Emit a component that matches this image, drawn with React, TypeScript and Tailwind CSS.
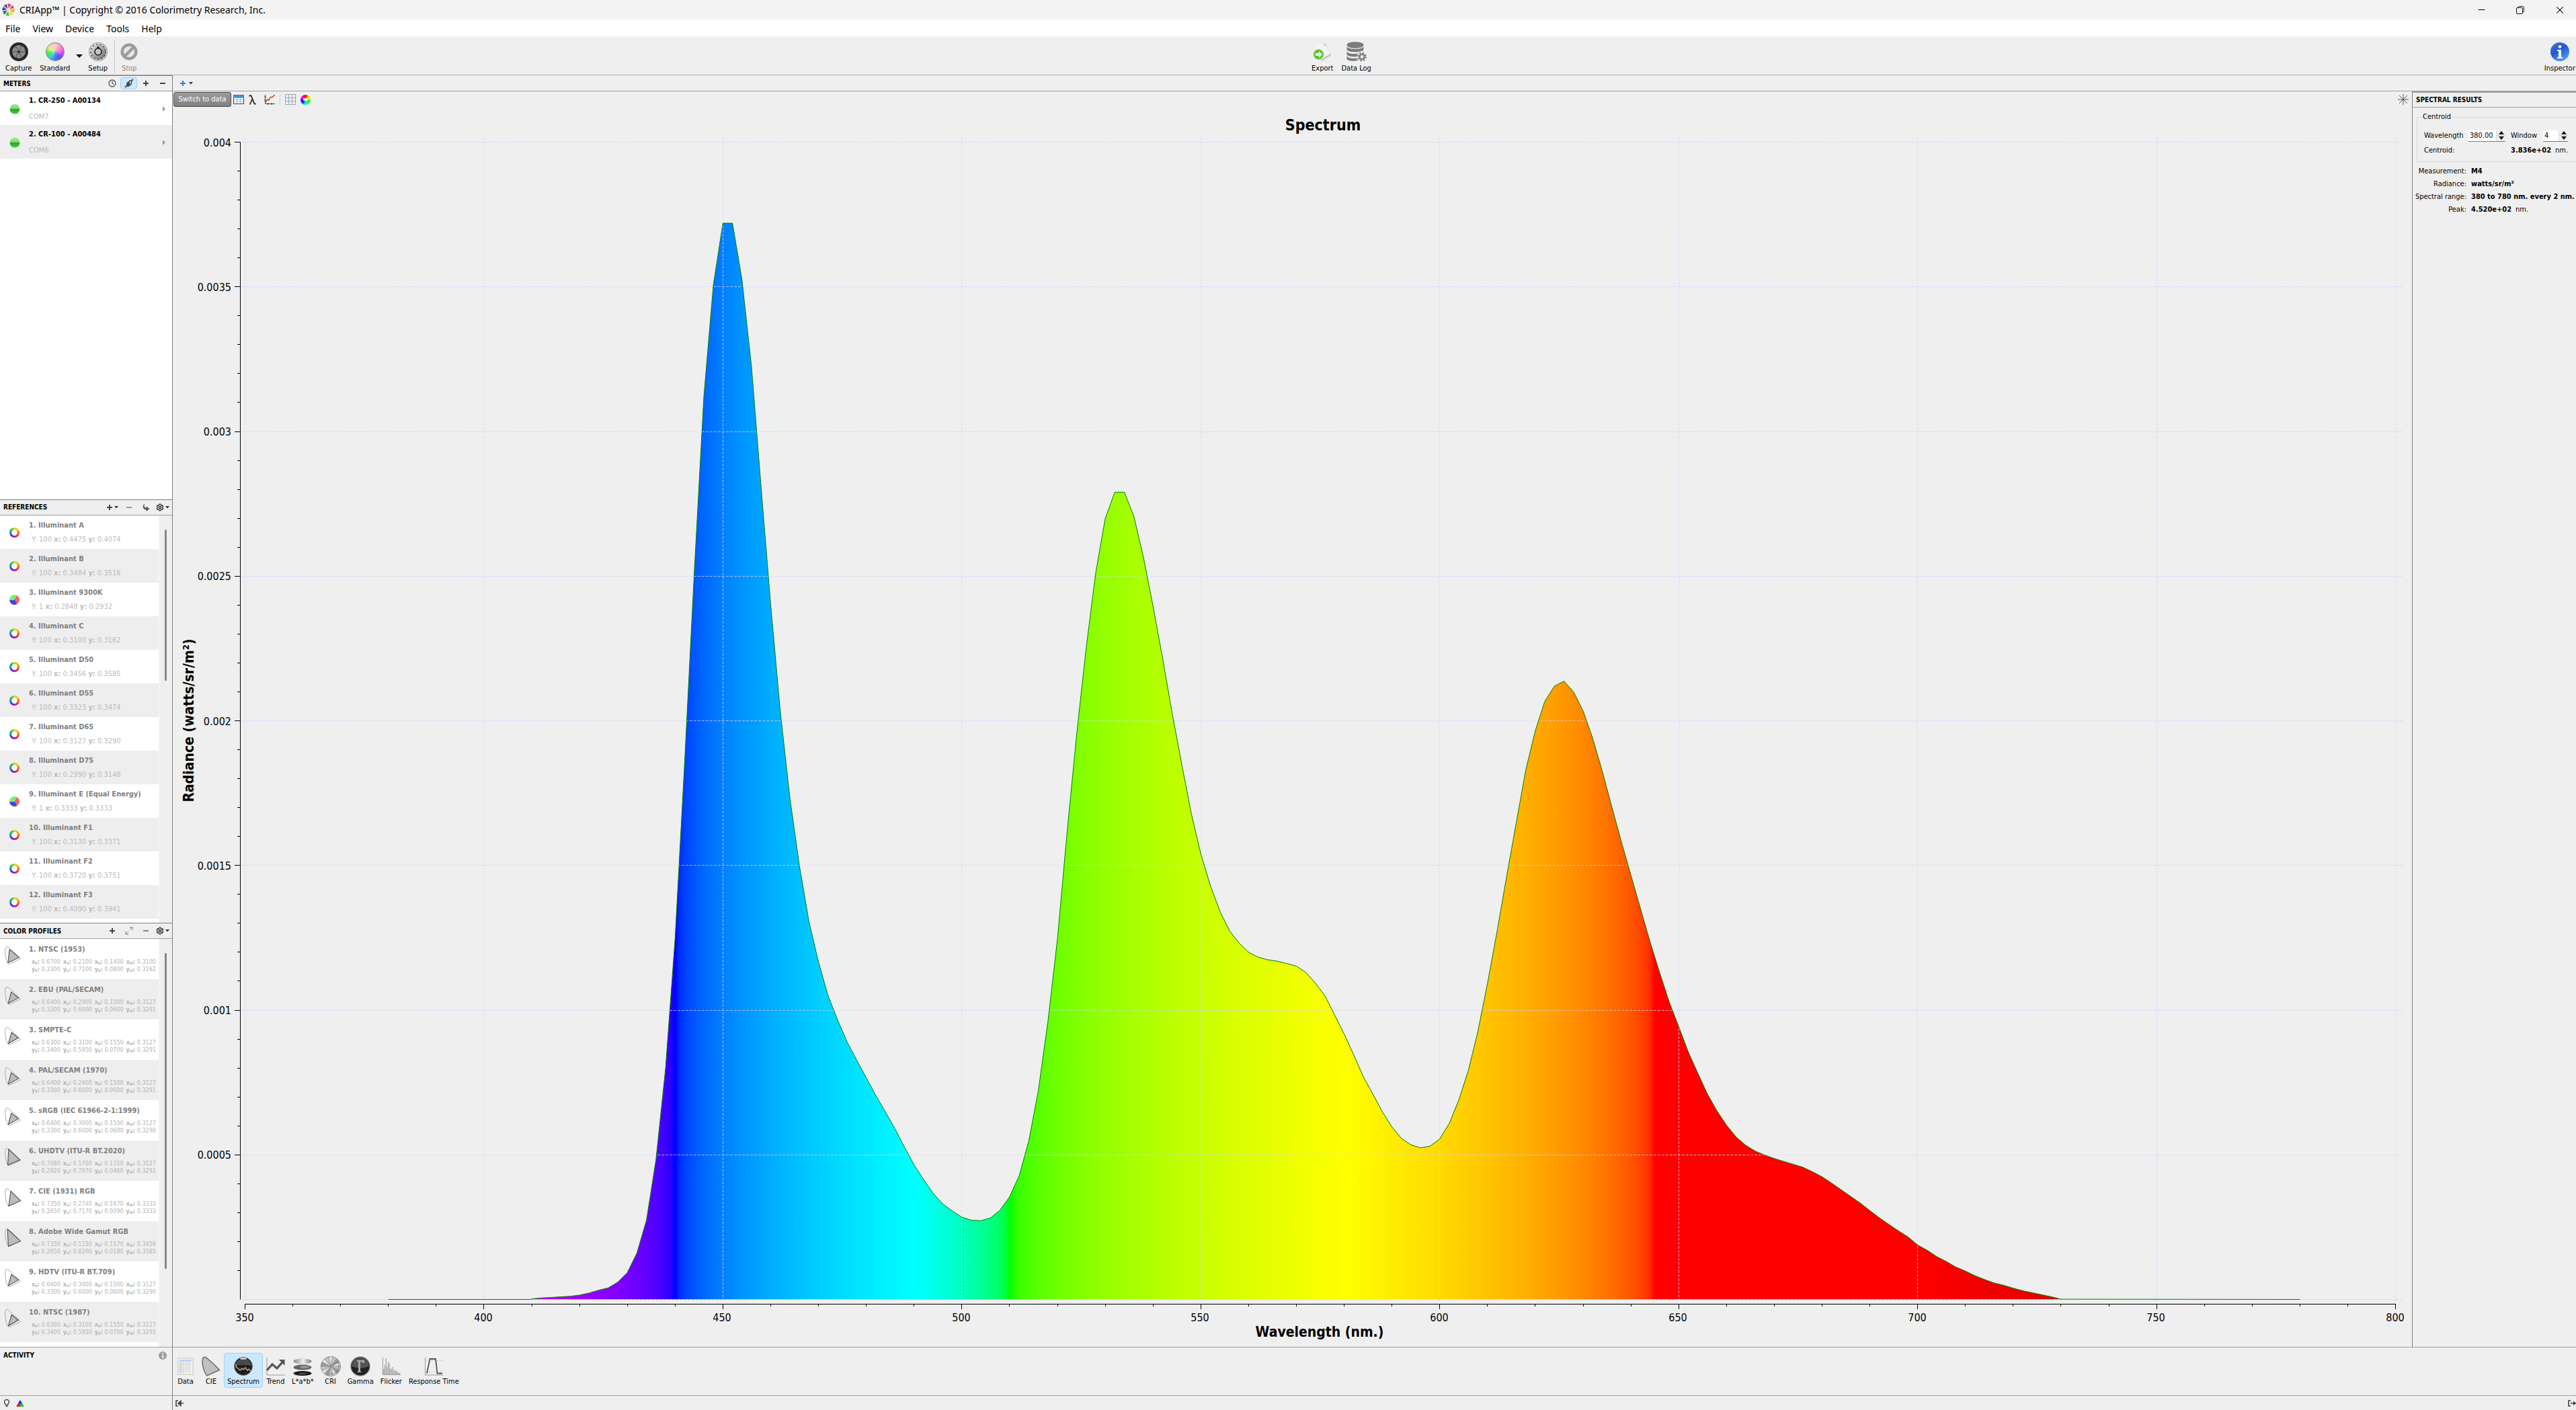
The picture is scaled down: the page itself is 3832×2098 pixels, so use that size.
import { useState, type ReactNode } from 'react';
import { Minus, Settings, X } from 'lucide-react';

interface Profile {
  name: string;
  x: string[];
  y: string[];
}

const METERS = [
  { name: '1. CR-250 - A00134', port: 'COM7' },
  { name: '2. CR-100 - A00484', port: 'COM6' },
];

const REFERENCES = [
  { name: '1. Illuminant A', Y: '100', x: '0.4475', y: '0.4074' },
  { name: '2. Illuminant B', Y: '100', x: '0.3484', y: '0.3516' },
  { name: '3. Illuminant 9300K', Y: '1', x: '0.2848', y: '0.2932' },
  { name: '4. Illuminant C', Y: '100', x: '0.3100', y: '0.3162' },
  { name: '5. Illuminant D50', Y: '100', x: '0.3456', y: '0.3585' },
  { name: '6. Illuminant D55', Y: '100', x: '0.3323', y: '0.3474' },
  { name: '7. Illuminant D65', Y: '100', x: '0.3127', y: '0.3290' },
  { name: '8. Illuminant D75', Y: '100', x: '0.2990', y: '0.3148' },
  { name: '9. Illuminant E (Equal Energy)', Y: '1', x: '0.3333', y: '0.3333' },
  { name: '10. Illuminant F1', Y: '100', x: '0.3130', y: '0.3371' },
  { name: '11. Illuminant F2', Y: '100', x: '0.3720', y: '0.3751' },
  { name: '12. Illuminant F3', Y: '100', x: '0.4090', y: '0.3941' },
];

// primaries in R, G, B, W order
const PROFILES: Profile[] = [
  { name: '1. NTSC (1953)', x: ['0.6700', '0.2100', '0.1400', '0.3100'], y: ['0.3300', '0.7100', '0.0800', '0.3162'] },
  { name: '2. EBU (PAL/SECAM)', x: ['0.6400', '0.2900', '0.1500', '0.3127'], y: ['0.3300', '0.6000', '0.0600', '0.3291'] },
  { name: '3. SMPTE-C', x: ['0.6300', '0.3100', '0.1550', '0.3127'], y: ['0.3400', '0.5950', '0.0700', '0.3291'] },
  { name: '4. PAL/SECAM (1970)', x: ['0.6400', '0.2900', '0.1500', '0.3127'], y: ['0.3300', '0.6000', '0.0600', '0.3291'] },
  { name: '5. sRGB (IEC 61966-2-1:1999)', x: ['0.6400', '0.3000', '0.1500', '0.3127'], y: ['0.3300', '0.6000', '0.0600', '0.3290'] },
  { name: '6. UHDTV (ITU-R BT.2020)', x: ['0.7080', '0.1700', '0.1310', '0.3127'], y: ['0.2920', '0.7970', '0.0460', '0.3291'] },
  { name: '7. CIE (1931) RGB', x: ['0.7350', '0.2740', '0.1670', '0.3333'], y: ['0.2650', '0.7170', '0.0090', '0.3333'] },
  { name: '8. Adobe Wide Gamut RGB', x: ['0.7350', '0.1150', '0.1570', '0.3456'], y: ['0.2650', '0.8260', '0.0180', '0.3585'] },
  { name: '9. HDTV (ITU-R BT.709)', x: ['0.6400', '0.3000', '0.1500', '0.3127'], y: ['0.3300', '0.6000', '0.0600', '0.3290'] },
  { name: '10. NTSC (1987)', x: ['0.6300', '0.3100', '0.1550', '0.3127'], y: ['0.3400', '0.5950', '0.0700', '0.3291'] },
];

// radiance in 1e-5 watts/sr/m², 410 nm to 730 nm, every 2 nm
const RADIANCE = [
  0.2, 0.5, 0.7, 0.9, 1.1, 1.5, 2.2, 3.2, 4, 6, 9.3, 16, 27.4, 48.5, 80, 125, 186, 251, 312, 350.7, 372, 372, 352.4, 322,
  280.4, 240, 203.4, 173.6, 150, 130.6, 116.6, 105, 96.6, 89, 82.7, 76.6, 70.5, 64.8, 59, 52.6, 46.5, 41.4, 36.7, 33,
  30.6, 28.4, 27.4, 27.2, 28.2, 30.9, 35.5, 42.8, 54.8, 72.2, 95.9, 124.5, 161, 195, 225, 251, 269.9, 279, 279, 270.6,
  256.4, 239.6, 221.7, 202.7, 185, 168, 154, 143, 134.2, 127.4, 123.2, 120, 118.3, 117.4, 116.9, 116.1, 115.2, 113,
  109.3, 104.9, 98.3, 91.7, 84.5, 77, 71, 64.8, 59.6, 55.6, 53.4, 52.4, 53, 55.5, 60.9, 69, 79.2, 92.8, 109.3, 127.3,
  146.3, 164.7, 183, 196.6, 206.8, 212, 213.7, 210, 203.4, 194, 182.6, 170.3, 158.2, 146.7, 135.2, 123.7, 113, 102.9,
  94.3, 85.6, 78.2, 71, 65.2, 60.2, 56.2, 53.3, 51.3, 49.9, 48.7, 47.7, 46.7, 45.7, 44.1, 42.4, 40.2, 37.9, 35.6, 33.3,
  30.7, 28.2, 25.9, 23.7, 21.6, 18.8, 17, 14.8, 13.1, 11.2, 9.8, 8.2, 6.9, 5.7, 4.9, 3.9, 3, 2.3, 1.6, 0.9, 0.1,
];

const HORSESHOE =
  'M.175 .005L.15 .03L.11 .09L.08 .17L.045 .295L.01 .5L.004 .66L.014 .75L.04 .812L.074 .834L.115 .826L.2 .78L.3 .69L.45 .55L.6 .4L.735 .265Z';

const WHEEL = 'bg-[conic-gradient(from_90deg,#f60,#f22,#a2b,#42d,#19c,#1b3,#cd2,#fb0,#f60)]';

// ---------- chart ----------

const CHART_W = 3331;
const CHART_H = 1844;
const BASE_Y = 1773.5;
const px = (nm: number) => 107.5 + (nm - 350) * 7.109;
const py = (v: number) => BASE_Y - v * 4.305;
const crisp = (n: number) => Math.floor(n) + 0.5;

function wavelengthColor(nm: number) {
  let r = 0;
  let g = 0;
  let b = 0;
  if (nm < 440) {
    r = (440 - nm) / 60;
    b = 1;
  } else if (nm < 490) {
    g = (nm - 440) / 50;
    b = 1;
  } else if (nm < 510) {
    g = 1;
    b = (510 - nm) / 20;
  } else if (nm < 580) {
    r = (nm - 510) / 70;
    g = 1;
  } else if (nm < 645) {
    r = 1;
    g = (645 - nm) / 65;
  } else {
    r = 1;
  }
  const fade = nm > 700 ? 0.3 + (0.7 * (780 - nm)) / 80 : 1;
  const ch = (c: number) => Math.round(255 * Math.pow(c * fade, 0.43));
  return `rgb(${ch(r)},${ch(g)},${ch(b)})`;
}

function SpectrumChart() {
  const points = RADIANCE.map((v, i) => `${px(410 + i * 2).toFixed(1)},${py(v).toFixed(1)}`).join(' ');
  const stops = Array.from({ length: 321 }, (_, i) => 410 + i);
  const xMajor = Array.from({ length: 10 }, (_, i) => 350 + i * 50);
  const xMinor = Array.from({ length: 46 }, (_, i) => 350 + i * 10);
  const yMajor = Array.from({ length: 9 }, (_, i) => i * 50);
  const yMinor = Array.from({ length: 40 }, (_, i) => (i + 1) * 10);

  return (
    <svg viewBox={`0 0 ${CHART_W} ${CHART_H}`} className="block min-h-0 w-full flex-1" role="img" aria-label="Spectrum">
      <defs>
        <linearGradient id="visible" gradientUnits="userSpaceOnUse" x1={px(410)} x2={px(730)} y1="0" y2="0">
          {stops.map((nm) => (
            <stop key={nm} offset={(nm - 410) / 320} stopColor={wavelengthColor(nm)} />
          ))}
        </linearGradient>
      </defs>

      <polygon points={`${px(410)},${BASE_Y} ${points} ${px(730)},${BASE_Y}`} fill="url(#visible)" />

      <g stroke="#d2d2ff" strokeOpacity=".75" strokeDasharray="4 2" fill="none">
        {xMajor.map((nm) => (
          <path key={nm} d={`M${crisp(px(nm))} 44V1776`} />
        ))}
        {yMajor.map((v) => (
          <path key={v} d={`M103 ${crisp(py(v))}H3317`} />
        ))}
      </g>

      <polyline
        points={`${px(380)},${BASE_Y} ${px(410)},${BASE_Y} ${points} ${px(780)},${BASE_Y}`}
        fill="none"
        stroke="#008000"
      />

      <g stroke="#000" fill="none">
        <path d={`M100.5 51V${BASE_Y}M107 1780.5H3307`} />
        {xMinor.map((nm) => (
          <path key={nm} d={`M${crisp(px(nm))} 1780v${nm % 50 === 0 ? 8 : 4}`} />
        ))}
        {yMinor.map((v) => (
          <path key={v} d={`M${v % 50 === 0 ? 92 : 96} ${crisp(py(v))}H101`} />
        ))}
      </g>

      <g className="text-base" fill="#000">
        {xMajor.map((nm) => (
          <text key={nm} x={Math.round(px(nm)) - 1} y="1806" textAnchor="middle">
            {nm}
          </text>
        ))}
        {yMajor.slice(1).map((v) => (
          <text key={v} x="87" y={Math.round(py(v)) + 6} textAnchor="end">
            {v / 100000}
          </text>
        ))}
      </g>

      <g className="text-[21px] font-bold" textAnchor="middle">
        <text x="1711" y="34" className="text-[23px]">
          Spectrum
        </text>
        <text x="1706" y="1829">
          Wavelength (nm.)
        </text>
        <text transform="translate(31 912) rotate(-90)">Radiance (watts/sr/m²)</text>
      </g>
    </svg>
  );
}

// ---------- small icons ----------

function Caret() {
  return (
    <svg viewBox="0 0 6 4" className="h-1 w-1.5 shrink-0">
      <path d="M0 0H6L3 3.5Z" fill="#333" />
    </svg>
  );
}

function PlusIcon({ color = '#444' }: { color?: string }) {
  return (
    <svg viewBox="0 0 10 10" className="size-2.5 shrink-0">
      <path d="M5 1V9M1 5H9" stroke={color} strokeWidth="2" />
    </svg>
  );
}

function MinusIcon({ color = '#444' }: { color?: string }) {
  return (
    <svg viewBox="0 0 10 10" className="size-2.5 shrink-0">
      <path d="M1 5H9" stroke={color} strokeWidth="2" />
    </svg>
  );
}

function ClockIcon() {
  return (
    <svg viewBox="0 0 12 12" className="size-3" fill="none" stroke="#555" strokeWidth="1.3">
      <circle cx="6" cy="6" r="5" />
      <path d="M6 2.5V6L8.5 7.5" />
    </svg>
  );
}

function PlugIcon() {
  return (
    <svg viewBox="0 0 14 14" className="size-3.5" fill="none" stroke="#4a4a4a">
      <path d="M1 13L3.5 10.5M10.5 3.5L13 1" strokeWidth="1.8" />
      <path d="M3.500 11C2 7.500 4 4 8.500 3L6 7H9L6.500 11Z" fill="#4a4a4a" stroke="none" />
      <path d="M10 3C12 6 10.500 10 5.500 11.500L8.500 7H6L8 3Z" strokeWidth="1.4" />
    </svg>
  );
}

function LoadIcon() {
  return (
    <svg viewBox="0 0 12 12" className="size-3">
      <path d="M4.500 .5C.5 2 .5 9 6.500 9.500V12L11.500 8L6.500 4.500V6.800C3.500 6.500 2.800 3 4.500 .5Z" fill="#555" />
    </svg>
  );
}

function ExpandIcon() {
  return (
    <svg viewBox="0 0 12 12" className="size-3" fill="none" stroke="#999" strokeWidth="1.3">
      <path d="M7 1H11V5M5 11H1V7" />
      <path d="M11 1L7 5M5 7L1 11" strokeDasharray="1.500 1" />
    </svg>
  );
}

function GamutIcon({ profile }: { profile: Profile }) {
  const triangle = [0, 1, 2].map((i) => `${profile.x[i]},${profile.y[i]}`).join(' ');
  return (
    <svg viewBox="0 0 26 28" className="mt-2.5 h-7 w-[26px] shrink-0">
      <g transform="translate(.5 28) scale(31.5 -31.5)" strokeWidth=".026" strokeLinejoin="round">
        <path d={HORSESHOE} fill="none" stroke="#999" />
        <polygon points={triangle} fill="#bbb" stroke="#444" strokeWidth=".032" />
      </g>
    </svg>
  );
}

function StatusBall() {
  return (
    <svg viewBox="0 0 16 17" className="h-[17px] w-4 shrink-0">
      <defs>
        <linearGradient id="ball" x1="0" x2="0" y1="0" y2="1">
          <stop offset="0" stopColor="#a6e59a" />
          <stop offset=".48" stopColor="#7fd672" />
          <stop offset=".5" stopColor="#1fa518" />
          <stop offset="1" stopColor="#3fd032" />
        </linearGradient>
      </defs>
      <ellipse cx="8" cy="9.500" rx="7.500" ry="7" fill="#000" opacity=".15" />
      <circle cx="8" cy="8" r="7.300" fill="url(#ball)" />
    </svg>
  );
}

function RgbPie() {
  return (
    <span className="size-[15px] shrink-0 rounded-full bg-[conic-gradient(from_30deg,#e66_0_120deg,#44d_120deg_240deg,#7e7_240deg)]" />
  );
}

function ColorRing() {
  return (
    <span className={`flex size-[15px] shrink-0 items-center justify-center rounded-full ${WHEEL}`}>
      <span className="size-[9px] rounded-full bg-white" />
    </span>
  );
}

function LogoIcon() {
  const colors = ['#d14a8b', '#e2512c', '#f1a62b', '#e8dc3a', '#5bb947', '#1f7d45', '#2455a8', '#7a3d98'];
  return (
    <svg viewBox="-10 -10 20 20" className="size-[19px] shrink-0">
      {colors.map((c, i) => (
        <path key={c} d="M0 -2L-2.800 -9Q0 -10.500 3 -8.500Z" fill={c} transform={`rotate(${i * 45 + 10})`} />
      ))}
      <circle r="2.500" fill="#dde3f5" />
    </svg>
  );
}

function CaptureIcon() {
  return (
    <svg viewBox="-14 -14 28 28" className="size-7">
      <circle r="14" fill="#2b2b2b" />
      <circle r="10.500" fill="#8a8a8a" stroke="#111" />
      {[0, 60, 120, 180, 240, 300].map((a) => (
        <path key={a} d="M1.500 -1Q5 -5 3 -10" fill="none" stroke="#444" strokeWidth=".8" transform={`rotate(${a})`} />
      ))}
      <circle r="1.600" fill="#000" />
    </svg>
  );
}

function StandardIcon() {
  return (
    <span className="flex size-7 rounded-full border border-[#888] bg-[radial-gradient(circle_at_50%_20%,#ffffffaa,#ffffff00_60%),conic-gradient(from_0deg,#fa7fa0,#f0569a_50deg,#e24bf0_90deg,#6a4af0_140deg,#3d7ef5_180deg,#35d6d0_220deg,#40e84a_260deg,#c8f04a_300deg,#fa7fa0)]" />
  );
}

function SetupIcon() {
  return (
    <svg viewBox="-14 -14 28 28" className="size-7">
      <defs>
        <linearGradient id="knob" x1="0" x2="1" y1="0" y2="1">
          <stop offset="0" stopColor="#eee" />
          <stop offset="1" stopColor="#666" />
        </linearGradient>
      </defs>
      <circle r="14" fill="#9a9a9a" />
      <circle r="12.500" fill="url(#knob)" stroke="#eee" strokeWidth="1" />
      <circle r="11" fill="none" stroke="#333" strokeWidth="1.500" strokeDasharray="2 3.500" pathLength="70" />
      <circle r="5" fill="#c5c5c5" stroke="#222" strokeWidth="1.600" />
      <path d="M0 -9L2.500 -5H-2.500Z" fill="#222" />
    </svg>
  );
}

function StopIcon() {
  return (
    <svg viewBox="-14 -14 28 28" className="size-7" fill="none" stroke="#9b9b9b" strokeWidth="4.500">
      <circle r="10.300" fill="#e6e6e6" />
      <path d="M-7 7L7 -7" />
    </svg>
  );
}

function ExportIcon() {
  return (
    <svg viewBox="0 0 28 28" className="size-7">
      <path d="M3 6L17 1L27 19L13 28Z" fill="#b9bcc2" />
      <path d="M2 5L16 0L26 17L12 26Z" fill="#f2f4f8" stroke="#dfe2e8" strokeWidth=".6" />
      <path d="M16 0L21 4L16 6Z" fill="#cfd6e2" />
      <circle cx="8.500" cy="18" r="7.300" fill="#59c22c" stroke="#7bd94e" />
      <path d="M4 16H9V13L14 18L9 23V20H4Z" fill="#fff" />
    </svg>
  );
}

function DataLogIcon() {
  return (
    <svg viewBox="0 0 30 30" className="size-[30px]">
      <g fill="#7c7c7c">
        <ellipse cx="13" cy="5" rx="12.500" ry="4.800" />
        <path d="M.5 7.500C3 12 23 12 25.500 7.500V12C23 16.500 3 16.500 .5 12Z" />
        <path d="M.5 14.500C3 19 16 19 20 16.500L16 22C9 23 2 22 .5 19Z" />
        <path d="M.5 21.500C3 25 11 25.500 15 24.500L17 28C9 29.500 2 28.500 .5 26Z" />
      </g>
      <circle cx="23" cy="22.500" r="4" fill="none" stroke="#efefef" strokeWidth="7" />
      <circle cx="23" cy="22.500" r="5.800" fill="none" stroke="#7c7c7c" strokeWidth="2.400" strokeDasharray="2.300 2.250" />
      <circle cx="23" cy="22.500" r="3.600" fill="#efefef" stroke="#7c7c7c" strokeWidth="2.400" />
    </svg>
  );
}

function InfoBall() {
  return (
    <svg viewBox="0 0 28 28" className="size-7">
      <defs>
        <linearGradient id="info" x1="0" x2=".6" y1="0" y2="1">
          <stop offset="0" stopColor="#4a78dc" />
          <stop offset=".5" stopColor="#1f57cf" />
          <stop offset="1" stopColor="#4a9df5" />
        </linearGradient>
      </defs>
      <circle cx="14" cy="14" r="14" fill="url(#info)" />
      <circle cx="14" cy="6.500" r="2.300" fill="#fff" />
      <path d="M10 11H16V22H18V24H10V22H12V13H10Z" fill="#fff" />
    </svg>
  );
}

// ---------- bottom view icons ----------

function DataIcon() {
  return (
    <svg viewBox="0 0 28 30" className="h-[30px] w-6" fill="none">
      <rect x="1" y="1" width="26" height="28" fill="#f4f4f4" stroke="#bbb" />
      <path d="M4 5H24" stroke="#a9ccf5" strokeWidth="2.500" />
      <path d="M5 6V27" stroke="#d4d4d4" strokeWidth="3" />
      <path d="M4 9H24M4 12H24M4 15H24M4 18H24M4 21H24M4 24H24M10 5V27M15 5V27M20 5V27" stroke="#ccc" strokeWidth=".8" />
    </svg>
  );
}

function CieIcon() {
  return (
    <svg viewBox="0 0 28 30" className="h-[30px] w-7">
      <path d="M8 29C3 24 0 10 1.500 4C2.500 .5 5 .5 8 3C14 8 21 14 26.500 20.500Z" fill="#bfc1bf" stroke="#666" strokeWidth="1.400" />
    </svg>
  );
}

function SpectrumIcon() {
  return (
    <svg viewBox="0 0 28 28" className="size-7">
      <circle cx="14" cy="14" r="13.500" fill="#1e1e1e" stroke="#777" />
      <path d="M2 13C3 -1 25 -1 26 13Q14 11 2 13Z" fill="#4a4a4a" />
      <ellipse cx="14" cy="2.500" rx="5" ry="1.300" fill="#ddd" />
      <path d="M3 11V15L6 17L9 20L12 17L14 19L17 16L20 20L22 18L25 21" fill="none" stroke="#c4c4c4" strokeWidth="1.200" />
    </svg>
  );
}

function TrendIcon() {
  return (
    <svg viewBox="0 0 28 28" className="size-7" fill="none">
      <path d="M1 1V27H28" stroke="#999" />
      <path d="M1 20L9 11L16 17L25 7" stroke="#555" strokeWidth="3.200" />
      <path d="M19 4L27.500 4V13Z" fill="#555" />
    </svg>
  );
}

function LabIcon() {
  return (
    <svg viewBox="0 0 28 28" className="size-7">
      <defs>
        <linearGradient id="lab">
          <stop offset="0" stopColor="#888" />
          <stop offset=".55" stopColor="#eee" />
          <stop offset="1" stopColor="#777" />
        </linearGradient>
      </defs>
      <path d="M14 0V6" stroke="#ccc" />
      <ellipse cx="14" cy="6.500" rx="13.500" ry="4" fill="url(#lab)" />
      <ellipse cx="14" cy="15.500" rx="13.500" ry="4" fill="#666" />
      <ellipse cx="17" cy="15" rx="7" ry="1.800" fill="#999" />
      <ellipse cx="14" cy="24.500" rx="13.500" ry="3.500" fill="#1c1c1c" />
      <ellipse cx="14" cy="25" rx="6" ry="1" fill="#555" />
    </svg>
  );
}

function CriIcon() {
  return (
    <svg viewBox="-15 -15 30 30" className="size-[30px]">
      <circle r="14.500" fill="#b4b4b4" stroke="#888" />
      {Array.from({ length: 14 }, (_, i) => (
        <path
          key={i}
          d="M0 0L-3 -14Q0 -15 3 -14Z"
          fill={i % 3 === 0 ? '#e2e2e2' : i % 3 === 1 ? '#c4c4c4' : '#999'}
          stroke="#888"
          strokeWidth=".5"
          transform={`rotate(${(i * 360) / 14})`}
        />
      ))}
      <path d="M0 0L11 -6Q14 0 9 8Q4 13 -2 11" fill="none" stroke="#777" />
    </svg>
  );
}

function GammaIcon() {
  return (
    <svg viewBox="0 0 30 30" className="size-[30px]">
      <circle cx="15" cy="15" r="14.200" fill="#222" stroke="#999" strokeWidth="1.200" />
      <path d="M2.500 15C2 -2 28 -2 27.500 15Q15 20 2.500 15Z" fill="#555" />
      <path d="M10 6H21V10H19Q18.500 8 15 8V22L17 24H10L12 22V8H10Z" fill="#aaa" />
    </svg>
  );
}

function FlickerIcon() {
  const bars = [8, 14, 24, 11, 19, 16, 9, 8, 11, 6, 7, 5, 4, 3, 2];
  return (
    <svg viewBox="0 0 28 28" className="size-7">
      <path d="M1.500 1V26.500H28" fill="none" stroke="#999" />
      {bars.map((h, i) => (
        <path key={i} d={`M${i * 1.7 + 2.8} 26V${26 - h}`} stroke="#888" strokeWidth=".9" />
      ))}
    </svg>
  );
}

function ResponseIcon() {
  return (
    <svg viewBox="0 0 28 28" className="size-7" fill="none">
      <path d="M1.500 1V27H28" stroke="#999" />
      <path d="M3 5H28M3 22H28" stroke="#bbb" strokeDasharray="2 2" strokeWidth="1.200" />
      <path d="M4 24.500L8.500 3H17L19.500 24.500H27" stroke="#555" strokeWidth="1.800" />
    </svg>
  );
}

const VIEWS = [
  { label: 'Data', icon: <DataIcon /> },
  { label: 'CIE', icon: <CieIcon /> },
  { label: 'Spectrum', icon: <SpectrumIcon /> },
  { label: 'Trend', icon: <TrendIcon /> },
  { label: 'L*a*b*', icon: <LabIcon /> },
  { label: 'CRI', icon: <CriIcon /> },
  { label: 'Gamma', icon: <GammaIcon /> },
  { label: 'Flicker', icon: <FlickerIcon /> },
  { label: 'Response Time', icon: <ResponseIcon /> },
];

// ---------- building blocks ----------

function ToolButton({ label, icon, disabled }: { label: string; icon: ReactNode; disabled?: boolean }) {
  return (
    <button disabled={disabled} className="flex flex-col items-center gap-0.5 disabled:text-[#8a8a8a]">
      <span className="flex h-[30px] items-center">{icon}</span>
      <span className="leading-4">{label}</span>
    </button>
  );
}

function HeaderButton({ label, active, children }: { label: string; active?: boolean; children: ReactNode }) {
  return (
    <button
      aria-label={label}
      className={
        active
          ? 'flex h-[18px] w-[25px] items-center justify-center rounded-sm border border-[#99d1ff] bg-[#cce8ff]'
          : 'flex h-[18px] w-[25px] items-center justify-center gap-0.5'
      }
    >
      {children}
    </button>
  );
}

function Section({ title, actions, children }: { title: string; actions: ReactNode; children: ReactNode }) {
  return (
    <section className="flex min-h-0 flex-1 basis-0 flex-col border-t border-[#7f7f7f]">
      <div className="flex h-[23px] shrink-0 items-center justify-between border-b border-[#9f9f9f] pr-0.5 pl-[5px]">
        <h2 className="text-[10px] font-bold">{title}</h2>
        <div className="flex">{actions}</div>
      </div>
      <div className="flex min-h-0 flex-1">{children}</div>
    </section>
  );
}

function ScrollTrack({ long }: { long?: boolean }) {
  return (
    <div className="flex w-5 shrink-0 justify-center border-l border-[#f8f8f8] pt-[21px]">
      <div className={long ? 'h-[470px] w-[3px] rounded-full bg-[#868686]' : 'h-[225px] w-[3px] rounded-full bg-[#868686]'} />
    </div>
  );
}

function PrimaryLine({ axis, values }: { axis: string; values: string[] }) {
  return (
    <p className="flex h-[11px] items-center justify-between">
      {values.map((v, i) => (
        <span key={i} className="whitespace-nowrap">
          <b>
            {axis}
            <sub className="bottom-[-1px] text-[5px]">{'RGBW'[i]}</sub>:
          </b>{' '}
          {v}
        </span>
      ))}
    </p>
  );
}

function Spinner({ id, value, onChange, className }: { id: string; value: string; onChange: (v: string) => void; className: string }) {
  const step = (d: number) => {
    const next = Number(value) + d;
    onChange(value.includes('.') ? next.toFixed(2) : String(next));
  };
  return (
    <span className={`flex h-[17px] border-b border-[#777] bg-white ${className}`}>
      <input id={id} value={value} onChange={(e) => onChange(e.target.value)} className="w-0 min-w-0 flex-1 pl-0.5 outline-none" />
      <span className="flex w-3.5 flex-col border-l border-[#ddd] bg-[#efefef]">
        <button aria-label="Increase" onClick={() => step(1)} className="flex flex-1 items-center justify-center border-b border-[#ccc]">
          <svg viewBox="0 0 8 5" className="h-[5px] w-2">
            <path d="M0 5H8L4 0Z" fill="#111" />
          </svg>
        </button>
        <button aria-label="Decrease" onClick={() => step(-1)} className="flex flex-1 items-center justify-center">
          <svg viewBox="0 0 8 5" className="h-[5px] w-2">
            <path d="M0 0H8L4 5Z" fill="#111" />
          </svg>
        </button>
      </span>
    </span>
  );
}

function Sidebar() {
  return (
    <aside className="flex w-[257px] shrink-0 flex-col border-r border-[#7f7f7f]">
      <Section
        title="METERS"
        actions={
          <>
            <HeaderButton label="History"><ClockIcon /></HeaderButton>
            <HeaderButton label="Connect" active><PlugIcon /></HeaderButton>
            <HeaderButton label="Add meter"><PlusIcon /></HeaderButton>
            <HeaderButton label="Remove meter"><MinusIcon /></HeaderButton>
          </>
        }
      >
        <ul className="flex-1 bg-white">
          {METERS.map((m) => (
            <li key={m.port} className="flex h-[50px] items-center pt-0.5 pr-2.5 pl-3.5 even:bg-[#eee]">
              <StatusBall />
              <div className="ml-[13px] flex-1 leading-6">
                <p className="font-bold">{m.name}</p>
                <p className="text-[#b8b8b8]">{m.port}</p>
              </div>
              <svg viewBox="0 0 4 8" className="h-2 w-1">
                <path d="M0 0L4 4L0 8Z" fill="#999" />
              </svg>
            </li>
          ))}
        </ul>
      </Section>

      <Section
        title="REFERENCES"
        actions={
          <>
            <HeaderButton label="Add reference"><PlusIcon /><Caret /></HeaderButton>
            <HeaderButton label="Remove reference"><MinusIcon color="#999" /></HeaderButton>
            <HeaderButton label="Load reference"><LoadIcon /></HeaderButton>
            <HeaderButton label="Reference settings"><Settings className="size-3 shrink-0" strokeWidth={3} color="#444" /><Caret /></HeaderButton>
          </>
        }
      >
        <ul className="min-w-0 flex-1 overflow-hidden bg-white">
          {REFERENCES.map((r) => (
            <li key={r.name} className="flex h-[50px] items-center pt-0.5 pl-3.5 even:bg-[#eee]">
              {r.Y === '1' ? <RgbPie /> : <ColorRing />}
              <div className="ml-3.5 pb-0.5 leading-[21px] whitespace-nowrap">
                <p className="font-bold text-[#7f7f7f]">{r.name}</p>
                <p className="pl-1 text-[#bcbcbc]">
                  Y: {r.Y} <b>x:</b> {r.x} <b>y:</b> {r.y}
                </p>
              </div>
            </li>
          ))}
        </ul>
        <ScrollTrack />
      </Section>

      <Section
        title="COLOR PROFILES"
        actions={
          <>
            <HeaderButton label="Add profile"><PlusIcon /></HeaderButton>
            <HeaderButton label="Expand profile"><ExpandIcon /></HeaderButton>
            <HeaderButton label="Remove profile"><MinusIcon color="#888" /></HeaderButton>
            <HeaderButton label="Profile settings"><Settings className="size-3 shrink-0" strokeWidth={3} color="#444" /><Caret /></HeaderButton>
          </>
        }
      >
        <ul className="min-w-0 flex-1 overflow-hidden bg-white">
          {PROFILES.map((p) => (
            <li key={p.name} className="flex h-[60px] pl-[7px] even:bg-[#eee]">
              <GamutIcon profile={p} />
              <div className="ml-2.5 flex-1 pt-[5px] whitespace-nowrap">
                <p className="leading-[21px] font-bold text-[#7f7f7f]">{p.name}</p>
                <div className="pt-[3px] pr-1 pl-1 text-[9px] text-[#b5b5b5]">
                  <PrimaryLine axis="x" values={p.x} />
                  <PrimaryLine axis="y" values={p.y} />
                </div>
              </div>
            </li>
          ))}
        </ul>
        <ScrollTrack long />
      </Section>

      <section className="flex h-[72px] shrink-0 items-start justify-between border-t border-[#9f9f9f] pt-1 pr-2 pl-[5px]">
        <h2 className="text-[10px] leading-4 font-bold">ACTIVITY</h2>
        <svg viewBox="0 0 12 12" className="mt-0.5 size-3">
          <circle cx="6" cy="6" r="6" fill="#9a9ea2" />
          <circle cx="6.300" cy="3" r="1" fill="#fff" />
          <path d="M5 5H7V8.500H7.800V9.500H4.800V8.500H5.500V6H5Z" fill="#fff" />
        </svg>
      </section>
      <div className="flex h-[22px] shrink-0 items-center gap-2 border-t border-[#9f9f9f] pl-1">
        <svg viewBox="0 0 12 12" className="size-3" fill="none" stroke="#444" strokeWidth="1.400">
          <path d="M4.500 8.500C4.500 7 2.500 6 2.500 4A3.500 3.500 0 0 1 9.500 4C9.500 6 7.500 7 7.500 8.500ZM4.500 10.500H7.500" />
        </svg>
        <svg viewBox="0 0 12 10" className="h-2.5 w-3">
          <path d="M6 0L9 5L6 6.500L3 5Z" fill="#22f" />
          <path d="M3 5L6 6.500V10H0Z" fill="#f01030" />
          <path d="M9 5L6 6.500V10H12Z" fill="#1cc430" />
        </svg>
      </div>
    </aside>
  );
}

function Results() {
  const [wavelength, setWavelength] = useState('380.00');
  const [span, setSpan] = useState('4');

  return (
    <aside className="w-[244px] shrink-0 overflow-hidden border-t-2 border-l border-t-[#9f9f9f] border-l-[#7f7f7f]">
      <h2 className="h-[22px] border-b border-[#9f9f9f] pl-[5px] text-[10px] leading-[21px] font-bold">SPECTRAL RESULTS</h2>
      <fieldset className="mt-1.5 ml-1.5 border-y border-l border-[#d8d8d8] pb-[7px] pl-2.5">
        <legend className="-ml-1 px-0.5 leading-4">Centroid</legend>
        <div className="grid grid-cols-[66px_63px_48px_auto] items-center gap-y-1 pt-[11px] leading-[18px]">
          <label htmlFor="wavelength">Wavelength</label>
          <Spinner id="wavelength" value={wavelength} onChange={setWavelength} className="w-[55px]" />
          <label htmlFor="window">Window</label>
          <Spinner id="window" value={span} onChange={setSpan} className="w-[37px]" />
          <span className="col-span-2">Centroid:</span>
          <span className="col-span-2 flex gap-1.5">
            <b>3.836e+02</b> nm.
          </span>
        </div>
      </fieldset>
      <dl className="grid grid-cols-[80px_auto] gap-x-[7px] pt-1 leading-[19px] whitespace-nowrap">
        <dt className="text-right">Measurement:</dt>
        <dd className="font-bold">M4</dd>
        <dt className="text-right">Radiance:</dt>
        <dd className="font-bold">watts/sr/m²</dd>
        <dt className="flex justify-end">Spectral range:</dt>
        <dd className="font-bold">380 to 780 nm. every 2 nm.</dd>
        <dt className="text-right">Peak:</dt>
        <dd className="flex gap-1.5">
          <b>4.520e+02</b> nm.
        </dd>
      </dl>
    </aside>
  );
}

function PlotToolbar() {
  return (
    <div className="flex h-6 shrink-0 items-center pr-[5px] pl-px">
      <button className="h-[22px] w-[86px] rounded-[3px] border border-[#4c4c4c] bg-linear-to-b from-[#9b9b9b] to-[#828282] text-white">
        Switch to data
      </button>
      <button aria-label="Table" className="ml-[3px]">
        <svg viewBox="0 0 16 14" className="h-3.5 w-4">
          <rect x=".5" y=".5" width="15" height="13" fill="#fff" stroke="#345" />
          <path d="M0 0H16V4.500H0Z" fill="#1e78d2" />
          <path d="M1 2H5M6 2H10M11 2H15" stroke="#7fd0ff" />
          <path d="M1 7.500H15M1 10.500H15M5.500 5V13M10.500 5V13" stroke="#9ab" strokeWidth=".8" />
        </svg>
      </button>
      <button aria-label="Wavelength" className="ml-[7px]">
        <svg viewBox="0 0 11 15" className="h-[15px] w-[11px]" fill="none" stroke="#333">
          <path d="M1 2.500C1.500 .5 3.500 .5 4.300 3L8 12.500Q8.800 14.500 10.500 13" strokeWidth="2" />
          <path d="M5.500 6.500L1.500 14.500" strokeWidth="1.700" />
        </svg>
      </button>
      <button aria-label="Curves" className="ml-3">
        <svg viewBox="0 0 16 16" className="size-4" fill="none">
          <path d="M1.500 1V14.500H16M0 4H3M0 9H3M6 13V16M11 13V16" stroke="#444" />
          <path d="M2 12L5 8L7 9L9 5L13 4L15.500 1" stroke="#d8481e" strokeWidth="1.600" />
        </svg>
      </button>
      <span className="mx-[7px] h-4 w-px bg-[#c8c8c8]" />
      <button aria-label="Grid">
        <svg viewBox="0 0 16 16" className="size-4" fill="none" stroke="#9aa8b5">
          <path d="M.5 0V16M5.500 0V16M10.500 0V16M15.500 0V16M0 .5H16M0 5.500H16M0 10.500H16M0 15.500H16" />
        </svg>
      </button>
      <button
        aria-label="Color"
        className="ml-[7px] flex size-[15px] items-center justify-center rounded-full bg-[conic-gradient(#f00,#ff0,#0f0,#0ff,#00f,#f0f,#f00)]"
      >
        <span className="h-1 w-[7px] rounded-full bg-[#eee]" />
      </button>
      <button aria-label="Fit" className="ml-auto">
        <svg viewBox="0 0 16 16" className="size-4" stroke="#555">
          <path d="M8 0V16M0 8H16M2 2L14 14M14 2L2 14" />
        </svg>
      </button>
    </div>
  );
}

export default function App() {
  const [view, setView] = useState('Spectrum');

  return (
    <div className="flex h-screen flex-col overflow-hidden bg-[#efefef] font-['DejaVu_Sans_Condensed','DejaVu_Sans','Noto_Sans',sans-serif] text-[11px] text-black">
      {/* title bar */}
      <header className="flex h-[29px] shrink-0 items-center bg-[#f3f3f3] pr-[15px] pl-[3px] font-['Noto_Sans','Open_Sans',sans-serif]">
        <LogoIcon />
        <h1 className="ml-[7px] text-[14px]">CRIApp™ | Copyright © 2016 Colorimetry Research, Inc.</h1>
        <div className="ml-auto flex items-center gap-11">
          <button aria-label="Minimize"><Minus className="size-[15px]" strokeWidth={1.6} /></button>
          <button aria-label="Restore">
            <svg viewBox="0 0 12 12" className="size-3" fill="none" stroke="#111">
              <rect x=".5" y="2.500" width="9" height="9" rx="1.500" />
              <path d="M3 2.500V2Q3 .5 4.500 .5H9.500Q11.500 .5 11.500 2.500V7.500Q11.500 9 10 9" />
            </svg>
          </button>
          <button aria-label="Close"><X className="size-[18px]" strokeWidth={1.4} /></button>
        </div>
      </header>

      <nav className="flex h-[27px] shrink-0 gap-[18px] border-b-2 border-[#f0f0f0] bg-white pl-2 font-['Noto_Sans','Open_Sans',sans-serif] text-[14px] leading-[27px]">
        {['File', 'View', 'Device', 'Tools', 'Help'].map((item) => (
          <button key={item}>{item}</button>
        ))}
      </nav>

      {/* main toolbar */}
      <div className="flex h-14 shrink-0 items-start justify-between border-b border-[#adadad] pt-1.5">
        <div className="flex items-start pl-2">
          <ToolButton label="Capture" icon={<CaptureIcon />} />
          <span className="w-3" />
          <ToolButton label="Standard" icon={<StandardIcon />} />
          <button aria-label="Choose standard" className="mt-[19px] ml-[9px]">
            <svg viewBox="0 0 10 5" className="h-[5px] w-2.5">
              <path d="M0 0H10L5 5Z" />
            </svg>
          </button>
          <span className="w-2" />
          <ToolButton label="Setup" icon={<SetupIcon />} />
          <span className="-mt-0.5 mr-[7px] ml-2.5 h-12 w-px bg-[#c8c8c8]" />
          <ToolButton label="Stop" icon={<StopIcon />} disabled />
        </div>
        <div className="flex gap-3">
          <ToolButton label="Export" icon={<ExportIcon />} />
          <ToolButton label="Data Log" icon={<DataLogIcon />} />
        </div>
        <div className="pr-px">
          <ToolButton label="Inspector" icon={<InfoBall />} />
        </div>
      </div>

      <div className="flex min-h-0 flex-1">
        <Sidebar />

        <main className="flex min-w-0 flex-1 flex-col">
          <div className="flex h-6 shrink-0 items-center border-b border-[#9f9f9f] pl-2.5">
            <button aria-label="Add tab" className="flex items-center gap-1">
              <PlusIcon color="#2f7de1" />
              <Caret />
            </button>
          </div>

          <div className="flex min-h-0 flex-1">
            <div className="flex min-w-0 flex-1 flex-col">
              <PlotToolbar />
              <SpectrumChart />
            </div>
            <Results />
          </div>

          {/* view switcher */}
          <div className="flex h-[72px] shrink-0 border-t border-[#9f9f9f] pt-2">
            {VIEWS.map((v) => (
              <button
                key={v.label}
                onClick={() => setView(v.label)}
                aria-pressed={view === v.label}
                className={
                  view === v.label
                    ? 'flex h-[52px] min-w-[38px] flex-col items-center gap-px rounded-sm border border-[#99d1ff] bg-[#cce8ff] px-1 pt-[5px]'
                    : 'flex h-[52px] min-w-[38px] flex-col items-center px-[5px] pt-[5px]'
                }
              >
                <span className="flex h-[30px] items-center">{v.icon}</span>
                <span className="leading-4">{v.label}</span>
              </button>
            ))}
          </div>

          <div className="flex h-[22px] shrink-0 items-center justify-between border-t border-[#9f9f9f] pl-1">
            <button aria-label="Collapse left panel">
              <svg viewBox="0 0 12 10" className="h-2.5 w-3" fill="none" stroke="#444" strokeWidth="1.600">
                <path d="M4 1H1V9H4M4 5H12" />
                <path d="M4 5L8 1.500V8.500Z" fill="#444" />
              </svg>
            </button>
            <button aria-label="Collapse right panel">
              <svg viewBox="0 0 12 10" className="h-2.5 w-3" fill="none" stroke="#444" strokeWidth="1.600">
                <path d="M4 1H1V9H4M4 5H12" />
                <path d="M12 5L8 1.500V8.500Z" fill="#444" stroke="none" />
              </svg>
            </button>
          </div>
        </main>
      </div>
    </div>
  );
}
